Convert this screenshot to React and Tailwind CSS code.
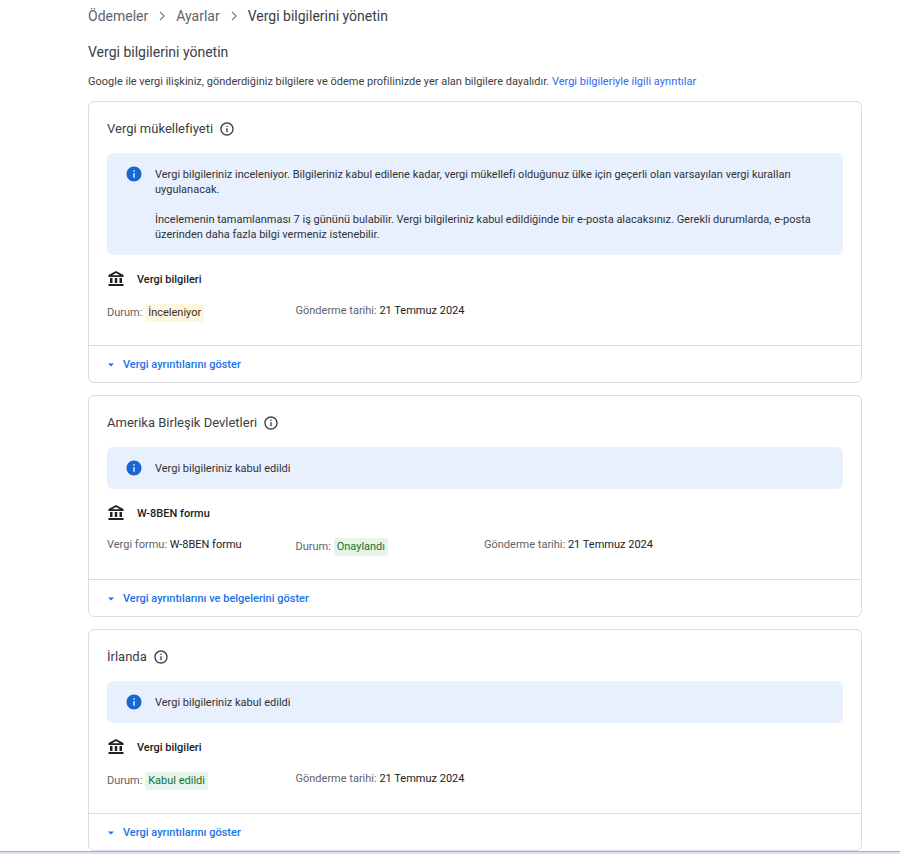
const statusStyles = {
  pending: 'bg-[#fef7e0] text-[#3c2e10]',
  accepted: 'bg-[#e6f4ea] text-[#137333]',
};

function InfoOutline() {
  return (
    <svg viewBox="0 0 24 24" className="size-4 fill-[#3c4043]" aria-hidden="true">
      <path d="M11 7h2v2h-2zm0 4h2v6h-2zm1-9C6.48 2 2 6.48 2 12s4.48 10 10 10 10-4.48 10-10S17.52 2 12 2zm0 18c-4.41 0-8-3.59-8-8s3.59-8 8-8 8 3.59 8 8-3.59 8-8 8z" />
    </svg>
  );
}

function InfoFilled() {
  return (
    <svg viewBox="0 0 24 24" className="size-[18px] shrink-0 fill-[#1967d2]" aria-hidden="true">
      <path d="M12 2C6.48 2 2 6.48 2 12s4.48 10 10 10 10-4.48 10-10S17.52 2 12 2zm1 15h-2v-6h2v6zm0-8h-2V7h2v2z" />
    </svg>
  );
}

function BankIcon() {
  return (
    <svg viewBox="0 0 18 18" className="size-[18px] shrink-0 fill-[#202124]" aria-hidden="true">
      <path fillRule="evenodd" d="M9 1 1.500 5V7h15V5L9 1zM9 3l3.900 2.200H5.100L9 3z" />
      <path d="M3 8h2.500v5H3zM7.750 8h2.500v5H7.750zM12.500 8H15v5h-2.500zM1.500 14h15v2h-15z" />
    </svg>
  );
}

function Chevron() {
  return (
    <svg viewBox="0 0 16 16" className="size-4 fill-none stroke-[#80868b]" strokeWidth="1.300" aria-hidden="true">
      <path d="M6 4l4 4-4 4" />
    </svg>
  );
}

function Field({ label, value, status }) {
  return (
    <div className={status ? 'pt-px' : ''}>
      <dt className="inline text-[#5f6368]">{label}: </dt>
      <dd className={status ? `inline-block rounded-[3px] px-[3px] leading-[18px] ${statusStyles[status]}` : 'inline text-[#202124]'}>
        {value}
      </dd>
    </div>
  );
}

function TaxCard({ title, messages, docName, fields, action }) {
  return (
    <section className="rounded-md border border-[#dadce0]">
      <div className="px-[18px] pt-[18px] pb-[23px]">
        <div className="flex h-[18px] items-center gap-[6px]">
          <h2 className="text-[13px] text-[#3c4043]">{title}</h2>
          <button type="button" aria-label={`${title} hakkında bilgi`}>
            <InfoOutline />
          </button>
        </div>
        <div className="mt-[15px] flex gap-3 rounded-md bg-[#e8f0fe] px-[18px] py-3">
          <InfoFilled />
          <div className="flex flex-col gap-[15px] pt-[2px] pb-px leading-[15px] text-[#303236]">
            {messages.map((text) => (
              <p key={text}>{text}</p>
            ))}
          </div>
        </div>
        <div className="mt-[15px] flex h-[18px] items-center gap-3">
          <BankIcon />
          <h3 className="pt-px leading-[15px] font-medium text-[#202124]">{docName}</h3>
        </div>
        <dl className="mt-[15px] grid h-[19px] grid-cols-4 gap-[18px] leading-[15px]">
          {fields.map((field) => (
            <Field key={field.label} {...field} />
          ))}
        </dl>
      </div>
      <div className="border-t border-[#dadce0] px-[18px]">
        <button type="button" className="flex h-9 items-center gap-2 pt-px leading-[15px] font-medium text-[#1a73e8]">
          <svg viewBox="0 0 8 8" className="size-2 fill-current" aria-hidden="true">
            <path d="M1 2.500h6L4 5.500z" />
          </svg>
          {action}
        </button>
      </div>
    </section>
  );
}

const submitted = { label: 'Gönderme tarihi', value: '21 Temmuz 2024' };

const cards = [
  {
    title: 'Vergi mükellefiyeti',
    messages: [
      'Vergi bilgileriniz inceleniyor. Bilgileriniz kabul edilene kadar, vergi mükellefi olduğunuz ülke için geçerli olan varsayılan vergi kuralları uygulanacak.',
      'İncelemenin tamamlanması 7 iş gününü bulabilir. Vergi bilgileriniz kabul edildiğinde bir e-posta alacaksınız. Gerekli durumlarda, e-posta üzerinden daha fazla bilgi vermeniz istenebilir.',
    ],
    docName: 'Vergi bilgileri',
    fields: [{ label: 'Durum', value: 'İnceleniyor', status: 'pending' }, submitted],
    action: 'Vergi ayrıntılarını göster',
  },
  {
    title: 'Amerika Birleşik Devletleri',
    messages: ['Vergi bilgileriniz kabul edildi'],
    docName: 'W-8BEN formu',
    fields: [
      { label: 'Vergi formu', value: 'W-8BEN formu' },
      { label: 'Durum', value: 'Onaylandı', status: 'accepted' },
      submitted,
    ],
    action: 'Vergi ayrıntılarını ve belgelerini göster',
  },
  {
    title: 'İrlanda',
    messages: ['Vergi bilgileriniz kabul edildi'],
    docName: 'Vergi bilgileri',
    fields: [{ label: 'Durum', value: 'Kabul edildi', status: 'accepted' }, submitted],
    action: 'Vergi ayrıntılarını göster',
  },
];

export default function App() {
  return (
    <div lang="tr" className="bg-white font-[Roboto,sans-serif] text-[11px]">
      <main className="pr-[38px] pl-[88px]">
        <nav aria-label="İçerik haritası" className="flex h-8 items-center gap-[6px] text-sm text-[#5f6368]">
          <a href="#odemeler">Ödemeler</a>
          <Chevron />
          <a href="#ayarlar">Ayarlar</a>
          <Chevron />
          <span className="text-[#3c4043]" aria-current="page">Vergi bilgilerini yönetin</span>
        </nav>
        <h1 className="mt-[10px] text-sm text-[#3c4043]">Vergi bilgilerini yönetin</h1>
        <p className="mt-3 mb-3 leading-[15px] text-[#3c4043]">
          Google ile vergi ilişkiniz, gönderdiğiniz bilgilere ve ödeme profilinizde yer alan bilgilere dayalıdır.{' '}
          <a href="#ayrintilar" className="text-[#3367f6]">Vergi bilgileriyle ilgili ayrıntılar</a>
        </p>
        <div className="flex flex-col gap-3">
          {cards.map((card) => (
            <TaxCard key={card.title} {...card} />
          ))}
        </div>
      </main>
      <div className="h-[3px] border-t border-[#a9b1c6] bg-[#d9e0f3]" />
    </div>
  );
}
